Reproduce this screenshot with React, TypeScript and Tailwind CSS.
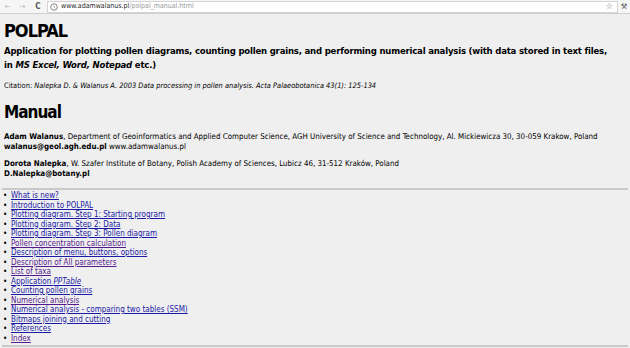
import React from "react";

const links: { t: React.ReactNode; v?: boolean }[] = [
  { t: "What is new?" },
  { t: "Introduction to POLPAL" },
  { t: "Plotting diagram. Step 1: Starting program" },
  { t: "Plotting diagram. Step 2: Data" },
  { t: "Plotting diagram. Step 3: Pollen diagram" },
  { t: "Pollen concentration calculation", v: true },
  { t: "Description of menu, buttons, options" },
  { t: "Description of All parameters", v: true },
  { t: "List of taxa", v: true },
  { t: <>Application <i>PPTable</i></> },
  { t: "Counting pollen grains" },
  { t: "Numerical analysis", v: true },
  { t: "Numerical analysis - comparing two tables (SSM)" },
  { t: "Bitmaps joining and cutting" },
  { t: "References" },
  { t: "Index", v: true },
];

export default function App() {
  return (
    <div className="w-[630px] h-[348px] overflow-hidden bg-[#efefef] text-black [font-family:'DejaVu_Sans_Condensed','DejaVu_Sans',sans-serif]">
      {/* browser toolbar */}
      <div className="h-[14px] bg-[#f6f6f6] border-b border-[#cfcfcf] flex items-center text-[7px] leading-none">
        <span className="w-[14px] text-center text-[#b8b8b8] text-[8px] ml-[1px]">←</span>
        <span className="w-[14px] text-center text-[#b8b8b8] text-[8px]">→</span>
        <span className="w-[14px] text-center font-bold text-[#555] text-[8px] ml-[2px]">C</span>
        <div className="ml-[2px] flex-1 h-[12px] bg-white border border-[#d4d4d4] flex items-center pl-[2px]">
          <svg width="8" height="8" viewBox="0 0 8 8" className="mr-[3px]">
            <circle cx="4" cy="4" r="3.3" fill="none" stroke="#777" strokeWidth="0.9" />
            <path d="M4 2.2v2.2l1.3 0.8" fill="none" stroke="#888" strokeWidth="0.7" />
          </svg>
          <span className="text-[#222]">www.adamwalanus.pl</span>
          <span className="text-[#999]">/polpal_manual.html</span>
          <span className="ml-auto mr-[4px] text-[#666] text-[9px]">☆</span>
        </div>
        <span className="w-[12px] text-center text-[#555] text-[8px]">⚒</span>
      </div>

      <div className="px-[4px]">
        <h1 className="mt-[8px] text-[18px] font-bold leading-[18px] tracking-[-1px]">POLPAL</h1>
        <p className="mt-[4px] max-w-[612px] text-[9.5px] font-bold leading-[14px] tracking-[-0.2px]">
          Application for plotting pollen diagrams, counting pollen grains, and performing numerical analysis (with data stored in text files, in <i>MS Excel, Word, Notepad</i> etc.)
        </p>
        <p className="mt-[8px] text-[7.4px] leading-[12px]">
          Citation: <i>Nalepka D. &amp; Walanus A. 2003 Data processing in pollen analysis. Acta Palaeobotanica 43(1): 125-134</i>
        </p>
        <h2 className="mt-[10px] text-[17px] font-bold leading-[20px] tracking-[-1px]">Manual</h2>
        <p className="mt-[10px] text-[7.9px] leading-[10px]">
          <b>Adam Walanus</b>, Department of Geoinformatics and Applied Computer Science, AGH University of Science and Technology, Al. Mickiewicza 30, 30-059 Krakow, Poland
          <br />
          <b>walanus@geol.agh.edu.pl</b> www.adamwalanus.pl
        </p>
        <p className="mt-[7px] text-[7.9px] leading-[10px]">
          <b>Dorota Nalepka</b>, W. Szafer Institute of Botany, Polish Academy of Sciences, Lubicz 46, 31-512 Kraków, Poland
          <br />
          <b>D.Nalepka@botany.pl</b>
        </p>
      </div>
      <div className="mx-[2px] mt-[9px] h-[2px] bg-[#c9c9c9]" />
      <ul className="mt-[1px] pl-[11px] text-[8px] leading-[9.5px]">
        {links.map((l, i) => (
          <li key={i} className="relative">
            <span className="absolute left-[-8px] top-0">•</span>
            <a href="#" className={"underline " + (l.v ? "text-[#551a8b]" : "text-[#1a1aa6]")}>{l.t}</a>
          </li>
        ))}
      </ul>
      <div className="mx-[2px] mt-[2px] h-[2px] bg-[#c9c9c9]" />
    </div>
  );
}
